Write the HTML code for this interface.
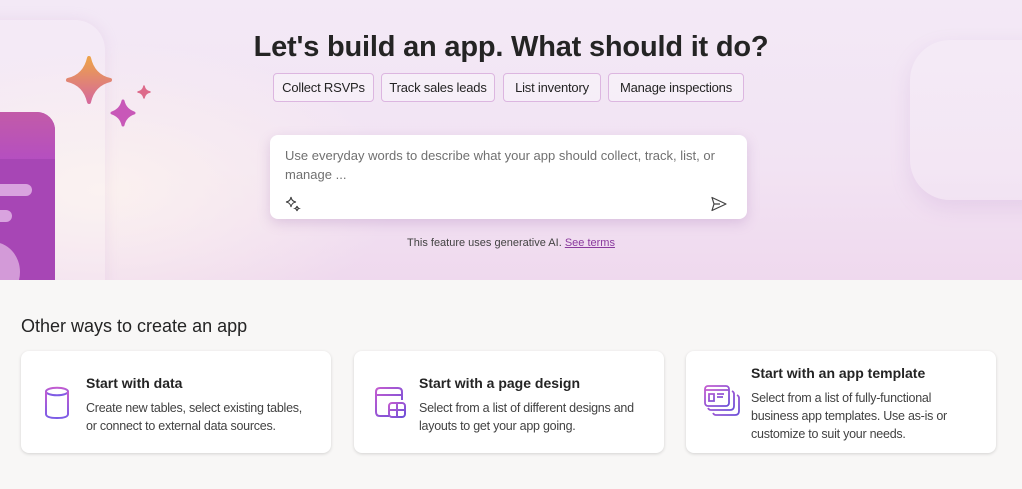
<!DOCTYPE html>
<html><head><style>
*{margin:0;padding:0;box-sizing:border-box}
body{width:1022px;height:489px;overflow:hidden;font-family:"Liberation Sans",sans-serif;background:#f8f7f6;position:relative;color:#242424}
.hero{position:absolute;left:0;top:0;width:1022px;height:280px;background:linear-gradient(180deg,#f3e9f6 0%,#f2e3f3 60%,#efd9ee 100%);overflow:hidden}
.hero:before{content:"";position:absolute;left:-100px;top:40px;width:500px;height:300px;background:radial-gradient(ellipse at 40% 50%,#fbf1ef 0%,rgba(251,241,239,0) 70%)}
.panel{position:absolute;left:-40px;top:20px;width:145px;height:300px;border-radius:30px;background:rgba(255,255,255,.12);box-shadow:0 0 14px rgba(200,160,210,.2)}
.purple{position:absolute;left:-30px;top:112px;width:85px;height:200px;border-radius:0 18px 0 0;background:#a746b5}
.purple .top{height:47px;border-radius:0 18px 0 0;background:linear-gradient(180deg,#c25ba8,#b54fc0)}
.purple .l1{position:absolute;left:20px;top:72px;width:42px;height:12px;border-radius:6px;background:#d9a3df}
.purple .l2{position:absolute;left:20px;top:98px;width:22px;height:12px;border-radius:6px;background:#d9a3df}
.purple .c{position:absolute;left:-5px;top:130px;width:55px;height:60px;border-radius:50%;background:#d39ad8}
.tri{position:absolute;left:910px;top:40px;width:200px;height:160px;border-radius:40px;background:rgba(255,255,255,.12);box-shadow:0 8px 20px rgba(180,130,200,.18)}
h1{position:absolute;top:31px;left:0;width:1022px;text-align:center;font-size:29px;font-weight:bold;color:#242424;letter-spacing:-.2px}
.chip{position:absolute;top:73px;height:29px;border:1px solid #dcb6e0;border-radius:4px;background:rgba(255,255,255,.35);font-size:13px;line-height:27px;text-align:center;color:#242424;letter-spacing:-.2px}
.box{position:absolute;left:270px;top:135px;width:477px;height:84px;background:#fff;border-radius:8px;box-shadow:0 4px 12px rgba(150,100,170,.25)}
.box p{position:absolute;left:15px;top:11px;width:450px;font-size:13px;line-height:19px;color:#707070}
.disc{position:absolute;top:237px;left:0;width:1022px;text-align:center;font-size:11px;color:#424242}
.disc a{color:#8a3a9e;text-decoration:underline}
h2{position:absolute;left:21px;top:316px;font-size:18px;font-weight:normal;color:#242424}
.card{position:absolute;top:351px;width:310px;height:102px;background:#fff;border-radius:8px;box-shadow:0 1px 3px rgba(0,0,0,.15)}
.card h3{position:absolute;left:65px;font-size:14px;font-weight:bold;color:#242424}
.card p{position:absolute;left:65px;width:240px;font-size:12.5px;line-height:18px;color:#424242;letter-spacing:-.25px}
.card svg{position:absolute}
</style></head><body>
<div class="hero">
<div class="panel"></div>
<div class="purple"><div class="top"></div><div class="l1"></div><div class="l2"></div><div class="c"></div></div>
<svg style="position:absolute;left:62px;top:56px" width="95" height="80">
<defs><linearGradient id="sg" x1="0" y1="0" x2="0" y2="1"><stop offset="0" stop-color="#eda24a"/><stop offset="1" stop-color="#d66a9a"/></linearGradient></defs>
<path d="M27 2 Q31 20 48 24 Q31 28 27 46 Q23 28 6 24 Q23 20 27 2Z" fill="url(#sg)" stroke="url(#sg)" stroke-width="4" stroke-linejoin="round"/>
<path d="M61 45 Q63 54 72 57 Q63 60 61 69 Q59 60 50 57 Q59 54 61 45Z" fill="#c858b8" stroke="#c858b8" stroke-width="3" stroke-linejoin="round"/>
<path d="M82 30 Q83 35 88 36 Q83 37 82 42 Q81 37 76 36 Q81 35 82 30Z" fill="#dd6a8a" stroke="#dd6a8a" stroke-width="1.5" stroke-linejoin="round"/>
</svg>
<div class="tri"></div>
</div>
<h1>Let's build an app. What should it do?</h1>
<div class="chip" style="left:273px;width:101px">Collect RSVPs</div>
<div class="chip" style="left:381px;width:114px">Track sales leads</div>
<div class="chip" style="left:503px;width:98px">List inventory</div>
<div class="chip" style="left:608px;width:136px">Manage inspections</div>
<div class="box"><p>Use everyday words to describe what your app should collect, track, list, or manage ...</p>
<svg style="position:absolute;left:14px;top:60px" width="18" height="18" viewBox="0 0 18 18" fill="none" stroke="#424242" stroke-width="1.1"><path d="M7 2 Q7.6 6.4 12 7 Q7.6 7.6 7 12 Q6.4 7.6 2 7 Q6.4 6.4 7 2Z"/><path d="M13 11 Q13.3 13 15 13.5 Q13.3 14 13 16 Q12.7 14 11 13.5 Q12.7 13 13 11Z"/></svg>
<svg style="position:absolute;left:440px;top:61px" width="18" height="16" viewBox="0 0 18 16" fill="none" stroke="#424242" stroke-width="1.2" stroke-linejoin="round"><path d="M2 1.5 L16 8 L2 14.5 L4 8 Z M4 8 H10"/></svg>
</div>
<div class="disc">This feature uses generative AI. <a>See terms</a></div>
<h2>Other ways to create an app</h2>
<div class="card" style="left:21px">
<svg style="left:22px;top:35px" width="28" height="34" viewBox="0 0 28 34" fill="none"><defs><linearGradient id="g1" x1="0" y1="0" x2="0" y2="1"><stop offset="0" stop-color="#c35cd0"/><stop offset="1" stop-color="#7b5ce6"/></linearGradient></defs><ellipse cx="14" cy="5.5" rx="11" ry="3.8" stroke="url(#g1)" stroke-width="2"/><path d="M3 5.5 V28 Q3 32 14 32 Q25 32 25 28 V5.5" stroke="url(#g1)" stroke-width="2"/></svg>
<h3 style="top:24px">Start with data</h3>
<p style="top:48px;width:228px">Create new tables, select existing tables, or connect to external data sources.</p></div>
<div class="card" style="left:354px">
<svg style="left:20px;top:35px" width="34" height="34" viewBox="0 0 34 34" fill="none" stroke-width="2"><defs><linearGradient id="g2" x1="0" y1="0" x2="1" y2="1"><stop offset="0" stop-color="#c35cd0"/><stop offset="1" stop-color="#6b4fd8"/></linearGradient></defs><path d="M15 30 H6 Q2 30 2 26 V6 Q2 2 6 2 H24 Q28 2 28 6 V14 M2 9 H28" stroke="url(#g2)"/><rect x="15" y="17" width="16" height="14" rx="3" stroke="url(#g2)"/><path d="M23 17 V31 M15 24 H31" stroke="url(#g2)"/></svg>
<h3 style="top:24px">Start with a page design</h3>
<p style="top:48px;width:215px">Select from a list of different designs and layouts to get your app going.</p></div>
<div class="card" style="left:686px">
<svg style="left:17px;top:33px" width="40" height="36" viewBox="0 0 40 36" fill="none" stroke-width="1.8"><defs><linearGradient id="g3" x1="0" y1="0" x2="1" y2="1"><stop offset="0" stop-color="#c35cd0"/><stop offset="1" stop-color="#6b4fd8"/></linearGradient></defs><rect x="2" y="2" width="24" height="20" rx="3" stroke="url(#g3)"/><path d="M2 6 H26 M6 10 H11 V17 H6Z M14 10 H21 M14 13 H20" stroke="url(#g3)"/><path d="M29 7 Q31 8 31 10 V22 Q31 26 27 26 H8 Q6 26 5 24" stroke="url(#g3)"/><path d="M34 11 Q36 12 36 14 V27 Q36 31 32 31 H13 Q11 31 10 29" stroke="url(#g3)"/></svg>
<h3 style="top:14px">Start with an app template</h3>
<p style="top:38px;width:210px">Select from a list of fully-functional business app templates. Use as-is or customize to suit your needs.</p></div>
</body></html>
